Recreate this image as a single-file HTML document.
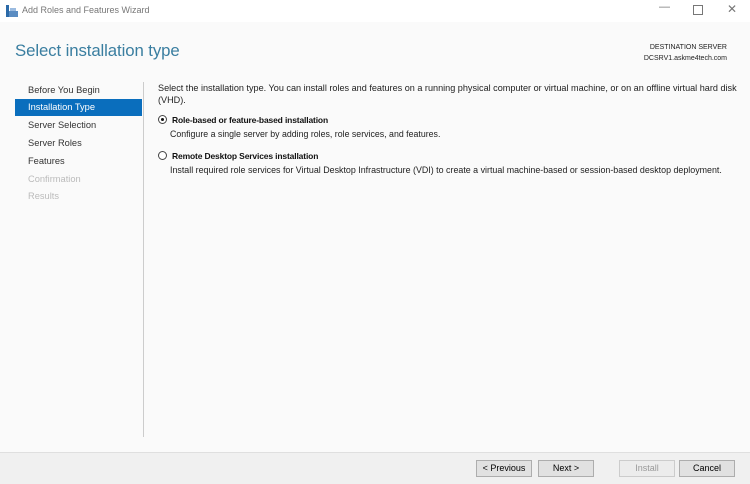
<!DOCTYPE html><html><head><style>
body{margin:0;width:750px;height:483px;overflow:hidden;font-family:"Liberation Sans",sans-serif;background:#fafafa;position:relative}
.a{position:absolute;white-space:nowrap}
.tb{left:0;top:0;width:750px;height:22px;background:#fff}
.nav{left:28px;font-size:9.3px;color:#333}
.btn{position:absolute;top:460px;height:15px;border:1px solid #adadad;background:#e1e1e1;font-size:9px;text-align:center;line-height:15px;color:#000}
</style></head><body>
<div class="a tb"></div>
<svg class="a" style="left:6px;top:5px" width="12" height="12"><rect x="0" y="0" width="3" height="12" fill="#2b6aa8"/><rect x="3" y="6" width="9" height="6" fill="#5a8cc2"/><rect x="4" y="3" width="6" height="3" fill="#9bbbe0"/></svg>
<div class="a" style="left:22px;top:5px;font-size:9px;color:#777">Add Roles and Features Wizard</div>
<div class="a" style="left:659px;top:1px;font-size:11px;color:#777">—</div>
<div class="a" style="left:693px;top:5px;width:8px;height:8px;border:1px solid #777"></div>
<div class="a" style="left:727px;top:2px;font-size:12px;color:#777">✕</div>
<div class="a" style="left:15px;top:41px;font-size:16.8px;letter-spacing:-0.1px;color:#3a7ea0">Select installation type</div>
<div class="a" style="right:23px;top:42px;font-size:7px;color:#222;text-align:right;line-height:11px">DESTINATION SERVER<br>DCSRV1.askme4tech.com</div>
<div class="a" style="left:143px;top:82px;width:1px;height:355px;background:#ccc"></div>
<div class="a nav" style="top:85px">Before You Begin</div>
<div class="a" style="left:15px;top:99px;width:127px;height:17px;background:#0a6ebd"></div>
<div class="a nav" style="top:102px;color:#fff">Installation Type</div>
<div class="a nav" style="top:120px">Server Selection</div>
<div class="a nav" style="top:138px">Server Roles</div>
<div class="a nav" style="top:156px">Features</div>
<div class="a nav" style="top:174px;color:#bbb">Confirmation</div>
<div class="a nav" style="top:191px;color:#bbb">Results</div>
<div class="a" style="left:158px;top:83px;font-size:9.1px;color:#222;line-height:11.5px">Select the installation type. You can install roles and features on a running physical computer or virtual machine, or on an offline virtual hard disk<br>(VHD).</div>
<div class="a" style="left:158px;top:115px;width:7px;height:7px;border:1px solid #444;border-radius:50%;background:#fff"></div>
<div class="a" style="left:161px;top:118px;width:3px;height:3px;border-radius:50%;background:#111"></div>
<div class="a" style="left:172px;top:115px;font-size:8.5px;font-weight:bold;letter-spacing:-0.15px;color:#111">Role-based or feature-based installation</div>
<div class="a" style="left:170px;top:129px;font-size:8.8px;color:#222">Configure a single server by adding roles, role services, and features.</div>
<div class="a" style="left:158px;top:151px;width:7px;height:7px;border:1px solid #444;border-radius:50%;background:#fff"></div>
<div class="a" style="left:172px;top:151px;font-size:8.5px;font-weight:bold;letter-spacing:-0.15px;color:#111">Remote Desktop Services installation</div>
<div class="a" style="left:170px;top:165px;font-size:8.9px;color:#222">Install required role services for Virtual Desktop Infrastructure (VDI) to create a virtual machine-based or session-based desktop deployment.</div>
<div class="a" style="left:0;top:452px;width:750px;height:31px;background:#f0f0f0;border-top:1px solid #dfdfdf"></div>
<div class="btn" style="left:476px;width:54px">&lt; Previous</div>
<div class="btn" style="left:538px;width:54px">Next &gt;</div>
<div class="btn" style="left:619px;width:54px;background:#ececec;border-color:#ccc;color:#999">Install</div>
<div class="btn" style="left:679px;width:54px">Cancel</div>
</body></html>
